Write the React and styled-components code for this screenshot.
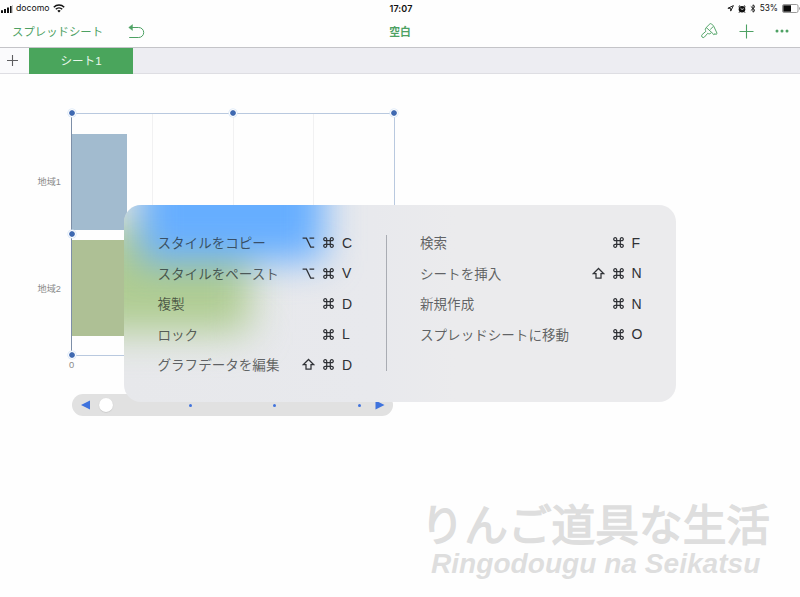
import React from "react";
import styled, { createGlobalStyle } from "styled-components";

const Global = createGlobalStyle`
  * { box-sizing: border-box; }
  body { margin: 0; background: #fff; overflow: hidden;
    font-family: "Liberation Sans", "Noto Sans CJK JP", sans-serif; }
`;

const Screen = styled.div`
  position: relative;
  width: 800px;
  height: 597px;
  overflow: hidden;
  display: flex;
  flex-direction: column;
  background: #fefefe;
`;

const StatusBar = styled.div`
  height: 17px;
  display: grid;
  grid-template-columns: 1fr auto 1fr;
  align-items: center;
  padding: 0 0 0 1px;
  font: 8.7px/17px "Inter", sans-serif;
  color: #111;
`;

const StatusGroup = styled.div`
  display: flex;
  align-items: center;
  justify-content: ${(p) => p.$align};
  gap: ${(p) => p.$gap}px;
  svg { display: block; flex: none; }
`;

const Percent = styled.span`
  font-size: 8.3px;
`;

const Clock = styled.div`
  font-size: 9px;
  font-weight: 600;
  letter-spacing: 0.1px;
  padding-left: 1px;
`;

const Toolbar = styled.div`
  height: 31px;
  display: grid;
  grid-template-columns: 1fr auto 1fr;
  align-items: center;
  padding: 0 11px 2px 12px;
  border-bottom: 1px solid #c4c4c8;
  color: #4da163;
  svg { display: block; flex: none; }
`;

const ToolGroup = styled.div`
  display: flex;
  align-items: center;
  justify-content: ${(p) => p.$align};
  gap: ${(p) => p.$gap}px;
`;

const BackLabel = styled.span`
  font: 11.4px/16px "Noto Sans CJK JP", sans-serif;
  white-space: nowrap;
`;

const DocTitle = styled.span`
  font: 700 10.8px/16px "Noto Sans CJK JP", sans-serif;
  padding-right: 1px;
`;

const TabBar = styled.div`
  height: 26px;
  display: flex;
  background: #ededf2;
  border-bottom: 1px solid #dedee3;
`;

const AddSheet = styled.div`
  width: 29px;
  display: flex;
  align-items: center;
  padding-left: 6px;
  background: #fafafc;
`;

const SheetTab = styled.div`
  width: 104px;
  height: 26px;
  text-align: center;
  background: #4aa55c;
  color: #e9f7eb;
  font: 11.6px/26px "Liberation Sans", "Noto Sans CJK JP", sans-serif;
`;

const Canvas = styled.div`
  position: relative;
  flex: 1;
`;

const Chart = styled.div`
  position: absolute;
  left: 30px;
  top: 39px;
  display: grid;
  grid-template-columns: 41px 324px;
  grid-template-rows: 243px 18px;
`;

const Labels = styled.div`
  display: flex;
  flex-direction: column;
  padding: 16px 10px 0 0;
`;

const Label = styled.div`
  height: 107px;
  line-height: 107px;
  text-align: right;
  white-space: nowrap;
  font-size: 9.2px;
  color: #8a8a8a;
`;

const Plot = styled.div`
  position: relative;
  display: flex;
  flex-direction: column;
  gap: 10px;
  padding-top: 20px;
  border: 1px solid #b9c9df;
  border-left-color: #7d8fa8;
  background: repeating-linear-gradient(90deg, transparent 0 79.8px, #f1f1f2 79.8px 80.8px);
`;

const Bar = styled.div`
  width: 54.6px;
  height: 96px;
  background: ${(p) => p.$color};
`;

const Handle = styled.i`
  position: absolute;
  left: ${(p) => p.$x}px;
  top: ${(p) => p.$y}px;
  width: 8px;
  height: 8px;
  margin: -5px 0 0 -4.5px;
  border: 1px solid #fff;
  border-radius: 50%;
  background: #3f69b1;
  background-clip: padding-box;
  box-shadow: 0 0 0 0.6px #d8e7f8;
`;

const Zero = styled.div`
  grid-column: 2;
  width: 10px;
  margin-left: -4.5px;
  text-align: center;
  font-size: 9.3px;
  line-height: 18px;
  color: #8a8a8a;
`;

const Slider = styled.div`
  position: absolute;
  left: 72px;
  top: 320px;
  width: 321px;
  height: 22px;
  padding: 0 8px 0 9px;
  display: flex;
  align-items: center;
  border-radius: 11px;
  background: #e1e1e1;
  svg { display: block; flex: none; }
`;

const Knob = styled.div`
  width: 14px;
  height: 14px;
  margin: 0 82.5px 0 8px;
  border-radius: 50%;
  background: #fff;
  box-shadow: 0 0.5px 1px #bbb;
`;

const Dots = styled.div`
  width: 172px;
  margin: 0 14px 0 -7px;
  display: flex;
  justify-content: space-between;
`;

const Track = styled.div`
  flex: 1;
  display: flex;
  align-items: center;
  min-width: 0;
`;

const Dot = styled.div`
  width: 3px;
  height: 3px;
  border-radius: 50%;
  background: #4173dc;
`;

const Panel = styled.div`
  position: absolute;
  left: 124px;
  top: 205px;
  width: 552px;
  height: 197px;
  padding: 22.3px 32px 0 33.5px;
  overflow: hidden;
  display: flex;
  border-radius: 17px;
  background: linear-gradient(90deg, #e7e8eb 0, #e8e9ed 45%, #ebebed 60%);
`;

const Glow = styled.div`
  position: absolute;
  left: ${(p) => p.$x}px;
  top: ${(p) => p.$y}px;
  width: ${(p) => p.$w}px;
  height: ${(p) => p.$h}px;
  background: ${(p) => p.$color};
  filter: blur(${(p) => p.$blur}px);
`;

const Column = styled.div`
  position: relative;
  width: ${(p) => p.$w}px;
`;

const Row = styled.div`
  height: 30.45px;
  display: flex;
  justify-content: space-between;
  align-items: flex-start;
`;

const RowLabel = styled.span`
  font: 13.55px/30px "Noto Sans CJK JP", sans-serif;
  white-space: nowrap;
  color: rgba(25, 28, 32, 0.68);
`;

const Keys = styled.span`
  height: 31px;
  display: flex;
  align-items: center;
  gap: 7px;
  color: #2f3136;
  svg { display: block; flex: none; }
`;

const Letter = styled.span`
  width: 11.5px;
  font: 14px/30px "Liberation Sans", sans-serif;
`;

const Divider = styled.div`
  position: relative;
  width: 1px;
  height: 136px;
  margin: 8px 33px 0 32.5px;
  background: #a9acb3;
`;

const Watermark = styled.div`
  position: absolute;
  left: 420.5px;
  top: 500px;
  display: flex;
  flex-direction: column;
  gap: 3px;
  color: #dedede;
  white-space: nowrap;
`;

const WatermarkJa = styled.div`
  font: 400 43.7px/44px "Noto Sans CJK JP", sans-serif;
  -webkit-text-stroke: 1.5px #dedede;
`;

const WatermarkEn = styled.div`
  padding-left: 10.5px;
  font: italic 700 28.1px/34px "Liberation Sans", sans-serif;
`;

const Glyph = ({ kind }) => (
  <svg width="13" height="13" viewBox="0 0 13 13" fill="none" stroke="currentColor" strokeWidth="1.25" strokeLinejoin="miter" role="img" aria-label={kind}>
    {kind === "command" && (
      <path d="M4.7 4.7H3.3a1.5 1.5 0 1 1 1.4-1.4v6.4a1.5 1.5 0 1 1-1.4-1.4h6.4a1.5 1.5 0 1 1-1.4 1.4V3.3a1.5 1.5 0 1 1 1.4 1.4z" />
    )}
    {kind === "option" && <path d="M.6 2.2h3.8l4.3 8.9h3.5M7.5 2.2h4.7" />}
    {kind === "shift" && <path d="M6.5 1.5 1.2 6.7H4v4.5h5V6.7h2.8z" />}
  </svg>
);

const Shortcut = ({ label, mods, letter }) => (
  <Row>
    <RowLabel>{label}</RowLabel>
    <Keys>
      {mods.map((m) => <Glyph key={m} kind={m} />)}
      <Letter>{letter}</Letter>
    </Keys>
  </Row>
);

const EDIT = [
  ["スタイルをコピー", ["option", "command"], "C"],
  ["スタイルをペースト", ["option", "command"], "V"],
  ["複製", ["command"], "D"],
  ["ロック", ["command"], "L"],
  ["グラフデータを編集", ["shift", "command"], "D"],
];

const DOCUMENT = [
  ["検索", ["command"], "F"],
  ["シートを挿入", ["shift", "command"], "N"],
  ["新規作成", ["command"], "N"],
  ["スプレッドシートに移動", ["command"], "O"],
];

const HANDLES = [[0, 0], [161, 0], [322.5, 0], [0, 121], [0, 242]];

export default function App() {
  return (
    <Screen>
      <Global />
      <StatusBar>
        <StatusGroup $align="flex-start" $gap={3}>
          <svg width="12" height="8" viewBox="0 0 12 8">
            <path d="M0 5.2h2V8H0zM3 4h2v4H3zM6 2.4h2V8H6z" fill="#111" />
            <path d="M9 1h1.6v7H9z" fill="#111" />
            <path d="M11.2 0h.7v8h-.7z" fill="#bbb" />
          </svg>
          <span>docomo</span>
          <svg width="12" height="9" viewBox="0 0 12 9" fill="none" stroke="#111" strokeWidth="1.5">
            <path d="M.8 3.2a7.5 7.5 0 0 1 10.4 0M2.8 5.3a4.6 4.6 0 0 1 6.4 0" />
            <path d="M6 8.4 4.3 6.7a2.5 2.5 0 0 1 3.4 0z" fill="#111" stroke="none" />
          </svg>
        </StatusGroup>
        <Clock>17:07</Clock>
        <StatusGroup $align="flex-end" $gap={4}>
          <svg width="7" height="7" viewBox="0 0 7 7" fill="none" stroke="#222">
            <path d="M6.4.6.9 3.3h2.8v2.8z" />
          </svg>
          <svg width="8" height="8" viewBox="0 0 8 8">
            <circle cx="4" cy="4.2" r="3.3" fill="#111" />
            <path d="m.5 1.8 1.6-1.3M7.5 1.8 5.9.5M1.8 6.7l-.8 1M6.2 6.7l.8 1" stroke="#111" />
            <path d="M2.5 3.2 4 4.5l1.7-.8" stroke="#fff" strokeWidth=".8" fill="none" />
          </svg>
          <svg width="6" height="9" viewBox="0 0 6 9" fill="none" stroke="#111" strokeWidth=".9">
            <path d="m.8 2.4 4.2 4L3 8.2V.8l2 1.8-4.2 4" />
          </svg>
          <Percent>53%</Percent>
          <svg width="18" height="9" viewBox="0 0 18 9">
            <rect x=".5" y=".5" width="15.5" height="8" rx="1.5" fill="none" stroke="#999" />
            <path d="M1.3 1.3h7.7v6.4H1.3z" fill="#080808" />
            <path d="M17 3v3q1-.2 1-1.5T17 3" fill="#999" />
          </svg>
        </StatusGroup>
      </StatusBar>
      <Toolbar>
        <ToolGroup $align="flex-start" $gap={25}>
          <BackLabel>スプレッドシート</BackLabel>
          <svg width="17" height="15" viewBox="0 0 17 15" fill="none" stroke="currentColor">
            <path d="M2 3.5h8.7a4.7 4.7 0 0 1 0 10H1.2" />
            <path d="M4.5.6.7 3.5l3.8 3z" fill="currentColor" strokeWidth=".4" />
          </svg>
        </ToolGroup>
        <DocTitle>空白</DocTitle>
        <ToolGroup $align="flex-end" $gap={21}>
          <svg width="17" height="16" viewBox="0 0 17 16" fill="none" stroke="currentColor" strokeWidth=".95" strokeLinejoin="round">
            <path d="M5.2 4.5 8.9.9q.8-.6 1.6 0l1.3 1.3q.6.7 1.1 1.4l3 6.4q.3 1-.7 1.4-1 .2-1.3-.9-.1 1.3-1.1 1.2-.7-.1-.9-1.2L5.2 4.5z" />
            <path d="m5.2 4.5-.8 1.6q-.3.8.2 1.5l.3.7-3.8 3.3q-1 1.2-.1 2.4 1.2 1.2 2.4.1l3.3-3.8.8.4q.8.4 1.5-.1l1.3-.8M12.5 3.3 9.2 6.5" />
          </svg>
          <svg width="15" height="15" viewBox="0 0 15 15" stroke="currentColor" strokeWidth="1.1">
            <path d="M7.5.5v14M.5 7.5h14" />
          </svg>
          <svg width="14" height="4" viewBox="0 0 14 4" fill="currentColor">
            <circle cx="2" cy="2" r="1.5" /><circle cx="7" cy="2" r="1.5" /><circle cx="12" cy="2" r="1.5" />
          </svg>
        </ToolGroup>
      </Toolbar>
      <TabBar>
        <AddSheet>
          <svg width="13" height="13" viewBox="0 0 13 13" stroke="#5d5d60" strokeWidth="1.1"><path d="M6.5 1v11M1 6.5h11" /></svg>
        </AddSheet>
        <SheetTab>シート1</SheetTab>
      </TabBar>
      <Canvas>
        <Chart>
          <Labels><Label>地域1</Label><Label>地域2</Label></Labels>
          <Plot>
            <Bar $color="#a2bbcf" />
            <Bar $color="#aec095" />
            {HANDLES.map(([x, y]) => <Handle key={`${x}-${y}`} $x={x} $y={y} />)}
          </Plot>
          <Zero>0</Zero>
        </Chart>
        <Slider>
          <svg width="10" height="10" viewBox="0 0 10 10"><path d="M0 5 9 .5v9z" fill="#3f73dd" /></svg>
          <Track>
            <Knob />
            <Dots><Dot /><Dot /><Dot /></Dots>
          </Track>
          <svg width="10" height="10" viewBox="0 0 10 10"><path d="M9.5 5 .5.5v9z" fill="#3f73dd" /></svg>
        </Slider>
      </Canvas>
      <Panel>
        <Glow $x={-40} $y={20} $w={166} $h={107} $blur={19} $color="#afcc92" />
        <Glow $x={16} $y={-80} $w={184} $h={136} $blur={18} $color="#66aeff" />
        <Column $w={196}>
          {EDIT.map(([label, mods, letter]) => <Shortcut key={label} label={label} mods={mods} letter={letter} />)}
        </Column>
        <Divider />
        <Column $w={223}>
          {DOCUMENT.map(([label, mods, letter]) => <Shortcut key={label} label={label} mods={mods} letter={letter} />)}
        </Column>
      </Panel>
      <Watermark>
        <WatermarkJa>りんご道具な生活</WatermarkJa>
        <WatermarkEn>Ringodougu na Seikatsu</WatermarkEn>
      </Watermark>
    </Screen>
  );
}
